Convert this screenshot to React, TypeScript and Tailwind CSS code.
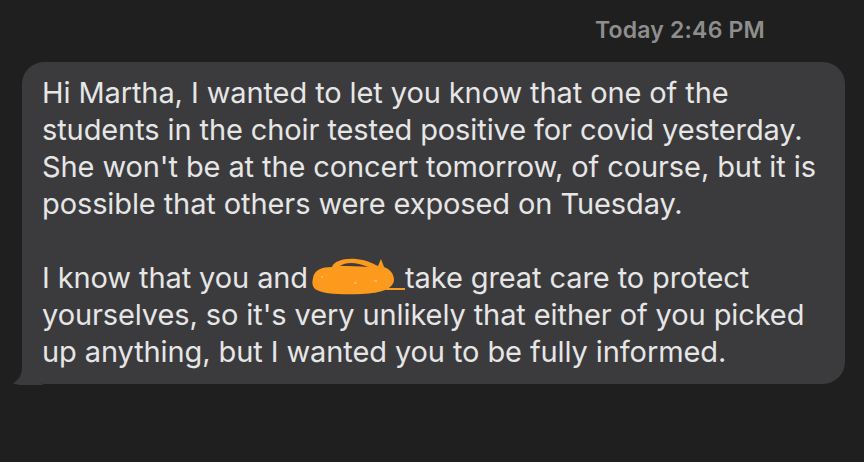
import React from "react";

export default function App() {
  return (
    <div className="w-[864px] h-[462px] bg-[#1f1f1f] overflow-hidden" style={{ fontFamily: "Inter, 'Liberation Sans', sans-serif" }}>
      <div className="flex justify-end pr-[99px] pt-[13px] h-[62px]">
        <span className="text-[23px] font-semibold text-[#8e8e8e] tracking-[0.2px]">Today 2:46 PM</span>
      </div>
      <div className="relative ml-[22px] w-[823px]">
        <svg className="absolute left-[-9px] bottom-[-1px]" width="34" height="24" viewBox="0 0 34 24">
          <path d="M9 0 L20 0 L20 14 C22 19 26 22 31 24 L10 24 C6 24 2 23.5 0 22 C6 19 9 14 9 6 Z" fill="#3b3b3d" />
        </svg>
        <div className="relative bg-[#3b3b3d] rounded-[22px] pl-[20px] pr-[10px] pt-[12px] pb-[14px] text-[29px] leading-[37px] text-[#e6e6e6] whitespace-nowrap tracking-[-0.1px]">
          <p>
            Hi Martha, I wanted to let you know that one of the
            <br />
            students in the choir tested positive for covid yesterday.
            <br />
            She won't be at the concert tomorrow, of course, but it is
            <br />
            possible that others were exposed on Tuesday.
          </p>
          <p className="mt-[37px]">
            I know that you and
            <span className="relative inline-block w-[97px] h-[1px] align-baseline">
              <svg className="absolute left-[4px] top-[-29px]" width="94" height="37" viewBox="0 0 94 37">
                <path d="M1 20 C2 12 10 9 20 9 C22 3 32 0 44 1 C54 2 60 5 66 8 L69 1 L72 9 C78 11 82 16 82 22 C81 31 70 35 50 36 C30 37 10 36 3 31 C0 28 0 24 1 20 Z" fill="#fb9a1c" />
                <path d="M28 8 C34 4 44 4 56 9 C48 8 38 8 28 8 Z" fill="#3b3b3d" />
                <path d="M74 31 L93 31" stroke="#fb9a1c" strokeWidth="2" />
                <path d="M9 19 L11 19 M42 25 L45 25 M62 23 L65 23" stroke="#f3d2a6" strokeWidth="1.2" />
              </svg>
            </span>
            take great care to protect
            <br />
            yourselves, so it's very unlikely that either of you picked
            <br />
            up anything, but I wanted you to be fully informed.
          </p>
        </div>
      </div>
    </div>
  );
}
